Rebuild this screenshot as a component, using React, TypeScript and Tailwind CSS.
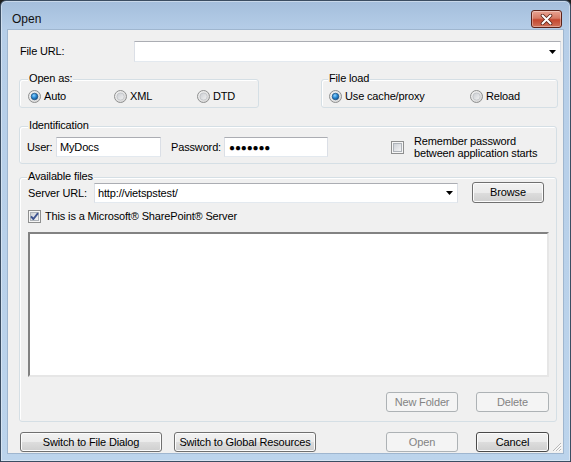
import type { ReactNode } from 'react';

function Radio({ checked }: { checked?: boolean }) {
  return (
    <svg width="13" height="13" viewBox="0 0 13 13" className="shrink-0">
      <defs>
        <linearGradient id="rbOuter" x1="0" y1="0" x2="1" y2="1">
          <stop offset="0" stopColor="#f4f4f4" />
          <stop offset="1" stopColor="#d4d4d4" />
        </linearGradient>
        <linearGradient id="rbInner" x1="0" y1="0" x2="1" y2="1">
          <stop offset="0" stopColor="#c9ccd1" />
          <stop offset="1" stopColor="#f3f3f3" />
        </linearGradient>
        <radialGradient id="rbDot" cx="0.4" cy="0.35" r="0.7">
          <stop offset="0" stopColor="#8fd3ff" />
          <stop offset="0.5" stopColor="#2a8ad4" />
          <stop offset="1" stopColor="#0f4c8a" />
        </radialGradient>
      </defs>
      <circle cx="6.5" cy="6.5" r="6" fill="url(#rbOuter)" stroke="#8e8f8f" />
      {checked ? (
        <circle cx="6.5" cy="6.5" r="3.3" fill="url(#rbDot)" stroke="#1c4f7c" strokeWidth="0.7" />
      ) : (
        <circle cx="6.5" cy="6.5" r="3.6" fill="url(#rbInner)" stroke="#b5b8bd" strokeWidth="0.6" />
      )}
    </svg>
  );
}

function Checkbox({ checked }: { checked?: boolean }) {
  return (
    <svg width="13" height="13" viewBox="0 0 13 13" className="shrink-0">
      <defs>
        <linearGradient id="cbInner" x1="0" y1="0" x2="1" y2="1">
          <stop offset="0" stopColor="#cbcfd5" />
          <stop offset="1" stopColor="#f6f6f6" />
        </linearGradient>
      </defs>
      <rect x="0.5" y="0.5" width="12" height="12" fill="#f6f6f6" stroke="#8e8f8f" />
      <rect x="2.5" y="2.5" width="8" height="8" fill="url(#cbInner)" stroke="#aeb3b9" />
      {checked && (
        <path d="M3 6.3 L5.4 9 L10 3.2" fill="none" stroke="#3e5490" strokeWidth="1.9" strokeLinejoin="round" />
      )}
    </svg>
  );
}

function Arrow() {
  return (
    <svg width="7" height="4" viewBox="0 0 7 4" className="ml-auto mr-[4px] shrink-0">
      <polygon points="0,0 7,0 3.5,4" fill="#000" />
    </svg>
  );
}

function Button({ children, className, disabled }: { children: ReactNode; className: string; disabled?: boolean }) {
  return (
    <div
      className={`${className} flex shrink-0 items-center justify-center rounded-[3px] border ${
        disabled
          ? 'border-[#adb2b5] bg-[#f4f4f4] text-[#838383]'
          : 'border-[#707070] bg-[linear-gradient(#f2f2f2,#ebebeb_50%,#dddddd_50%,#cfcfcf)] shadow-[inset_0_0_0_1px_#fcfcfc]'
      }`}
    >
      {children}
    </div>
  );
}

function GroupLabel({ children, left }: { children: ReactNode; left: string }) {
  return <span className={`absolute -top-[8px] ${left} bg-[#f0f0f0] px-[1px]`}>{children}</span>;
}

export default function App() {
  return (
    <div className="h-[462px] w-[571px] bg-[#1e1e1e] font-['Liberation_Sans',Arial,sans-serif] text-[11px] leading-[13px] tracking-[-0.15px] text-black">
      <div className="relative flex h-full w-full flex-col rounded-t-[6px] border border-[#3b4d62] bg-[linear-gradient(#a4bedc,#b6cee8_30px,#bcd4ec)] shadow-[inset_0_0_0_1px_rgba(255,255,255,0.4)]">
        {/* Title bar */}
        <div className="flex h-[29px] shrink-0 items-start pl-[11px] pr-[8px]">
          <span className="mt-[11px] text-[12px] leading-[15px] tracking-normal text-[#111]">Open</span>
          <div className="ml-auto mt-[9px] flex h-[18px] w-[31px] items-center justify-center rounded-[3px] border border-[#5c2218] bg-[linear-gradient(#e8a493,#d67b65_45%,#c4472f_55%,#d0725a)] shadow-[inset_0_0_0_1px_rgba(255,255,255,0.35)]">
            <svg width="13" height="11" viewBox="0 0 13 11">
              <path d="M2.5 1.5 L10.5 9.5 M10.5 1.5 L2.5 9.5" stroke="#5a2418" strokeWidth="3.6" strokeLinecap="round" />
              <path d="M2.5 1.5 L10.5 9.5 M10.5 1.5 L2.5 9.5" stroke="#fff" strokeWidth="2" strokeLinecap="round" />
            </svg>
          </div>
        </div>

        {/* Client area */}
        <div className="relative mx-[7px] flex h-[423px] shrink-0 flex-col bg-[#f0f0f0] shadow-[0_0_0_1px_#9fb6cf]">
          {/* File URL */}
          <div className="mt-[11px] flex h-[21px] items-center">
            <span className="w-[126px] shrink-0 pl-[12px]">File URL:</span>
            <div className="flex h-[21px] w-[427px] items-center border border-[#abadb3] border-b-[#e3e9ef] border-l-[#dbdfe6] border-r-[#dbdfe6] bg-white">
              <Arrow />
            </div>
          </div>

          {/* Open as / File load */}
          <div className="mt-[17px] flex gap-[62px] pl-[11px]">
            <div className="relative h-[29px] w-[240px] rounded-[3px] border border-[#d5dfe5] shadow-[inset_1px_1px_0_#fff]">
              <GroupLabel left="left-[8px]">Open as:</GroupLabel>
              <div className="flex pl-[8px] pt-[10px]">
                <div className="flex w-[86px] items-center gap-[3px]">
                  <Radio checked />
                  <span>Auto</span>
                </div>
                <div className="flex w-[83px] items-center gap-[3px]">
                  <Radio />
                  <span>XML</span>
                </div>
                <div className="flex items-center gap-[3px]">
                  <Radio />
                  <span>DTD</span>
                </div>
              </div>
            </div>
            <div className="relative h-[29px] w-[237px] rounded-[3px] border border-[#d5dfe5] shadow-[inset_1px_1px_0_#fff]">
              <GroupLabel left="left-[6px]">File load</GroupLabel>
              <div className="flex pl-[7px] pt-[10px]">
                <div className="flex w-[141px] items-center gap-[3px]">
                  <Radio checked />
                  <span>Use cache/proxy</span>
                </div>
                <div className="flex items-center gap-[3px]">
                  <Radio />
                  <span>Reload</span>
                </div>
              </div>
            </div>
          </div>

          {/* Identification */}
          <div className="relative ml-[11px] mt-[18px] h-[38px] w-[538px] rounded-[3px] border border-[#d5dfe5] shadow-[inset_1px_1px_0_#fff]">
            <GroupLabel left="left-[8px]">Identification</GroupLabel>
            <div className="mt-[10px] flex h-[20px] items-center pl-[7px]">
              <span className="w-[29px] shrink-0">User:</span>
              <div className="flex h-[20px] w-[105px] items-center border border-[#abadb3] border-b-[#e3e9ef] border-l-[#dbdfe6] border-r-[#dbdfe6] bg-white pl-[3px]">
                MyDocs
              </div>
              <span className="ml-[10px] w-[53px] shrink-0">Password:</span>
              <div className="flex h-[20px] w-[104px] items-center border border-[#abadb3] border-b-[#e3e9ef] border-l-[#dbdfe6] border-r-[#dbdfe6] bg-white pl-[4px] text-[10px]">
                ●●●●●●●
              </div>
              <div className="ml-[63px]">
                <Checkbox />
              </div>
              <div className="ml-[10px] leading-[12px]">
                <div>Remember password</div>
                <div>between application starts</div>
              </div>
            </div>
          </div>

          {/* Available files */}
          <div className="relative ml-[11px] mt-[13px] h-[245px] w-[538px] rounded-[3px] border border-[#d5dfe5] shadow-[inset_1px_1px_0_#fff]">
            <GroupLabel left="left-[7px]">Available files</GroupLabel>
            <div className="flex flex-col pl-[8px] pt-[5px]">
              <div className="flex h-[20px] items-start">
                <span className="w-[66px] shrink-0 leading-[20px]">Server URL:</span>
                <div className="flex h-[20px] w-[364px] items-center border border-[#abadb3] border-b-[#e3e9ef] border-l-[#dbdfe6] border-r-[#dbdfe6] bg-white pl-[3px]">
                  <span>http://vietspstest/</span>
                  <Arrow />
                </div>
                <Button className="-mt-px ml-[14px] h-[21px] w-[72px]">Browse</Button>
              </div>
              <div className="mt-[7px] flex h-[13px] items-center gap-[4px]">
                <Checkbox checked />
                <span>This is a Microsoft® SharePoint® Server</span>
              </div>
              <div className="mt-[9px] h-[145px] w-[521px] border-2 border-b-[#e6e6e6] border-l-[#828282] border-r-[#e6e6e6] border-t-[#828282] bg-white" />
              <div className="mt-[15px] flex w-[521px] justify-end gap-[18px]">
                <Button disabled className="h-[20px] w-[72px]">New Folder</Button>
                <Button disabled className="h-[20px] w-[73px]">Delete</Button>
              </div>
            </div>
          </div>

          {/* Bottom buttons */}
          <div className="mt-[10px] flex h-[20px] pl-[12px]">
            <Button className="h-[20px] w-[142px]">Switch to File Dialog</Button>
            <Button className="ml-[12px] h-[20px] w-[142px]">Switch to Global Resources</Button>
            <Button disabled className="ml-[70px] h-[20px] w-[72px]">Open</Button>
            <Button className="ml-[18px] h-[20px] w-[73px] !border-[#4a4a4a]">Cancel</Button>
          </div>

          {/* Resize grip */}
          <svg width="11" height="11" viewBox="0 0 11 11" className="absolute bottom-[1px] right-[1px]">
            <path d="M10 2 L2 10 M10 5 L5 10 M10 8 L8 10" stroke="#b8b8b8" strokeWidth="1" />
            <path d="M10.5 3 L3 10.5 M10.5 6 L6 10.5 M10.5 9 L9 10.5" stroke="#fff" strokeWidth="1" />
          </svg>
        </div>
      </div>
    </div>
  );
}
